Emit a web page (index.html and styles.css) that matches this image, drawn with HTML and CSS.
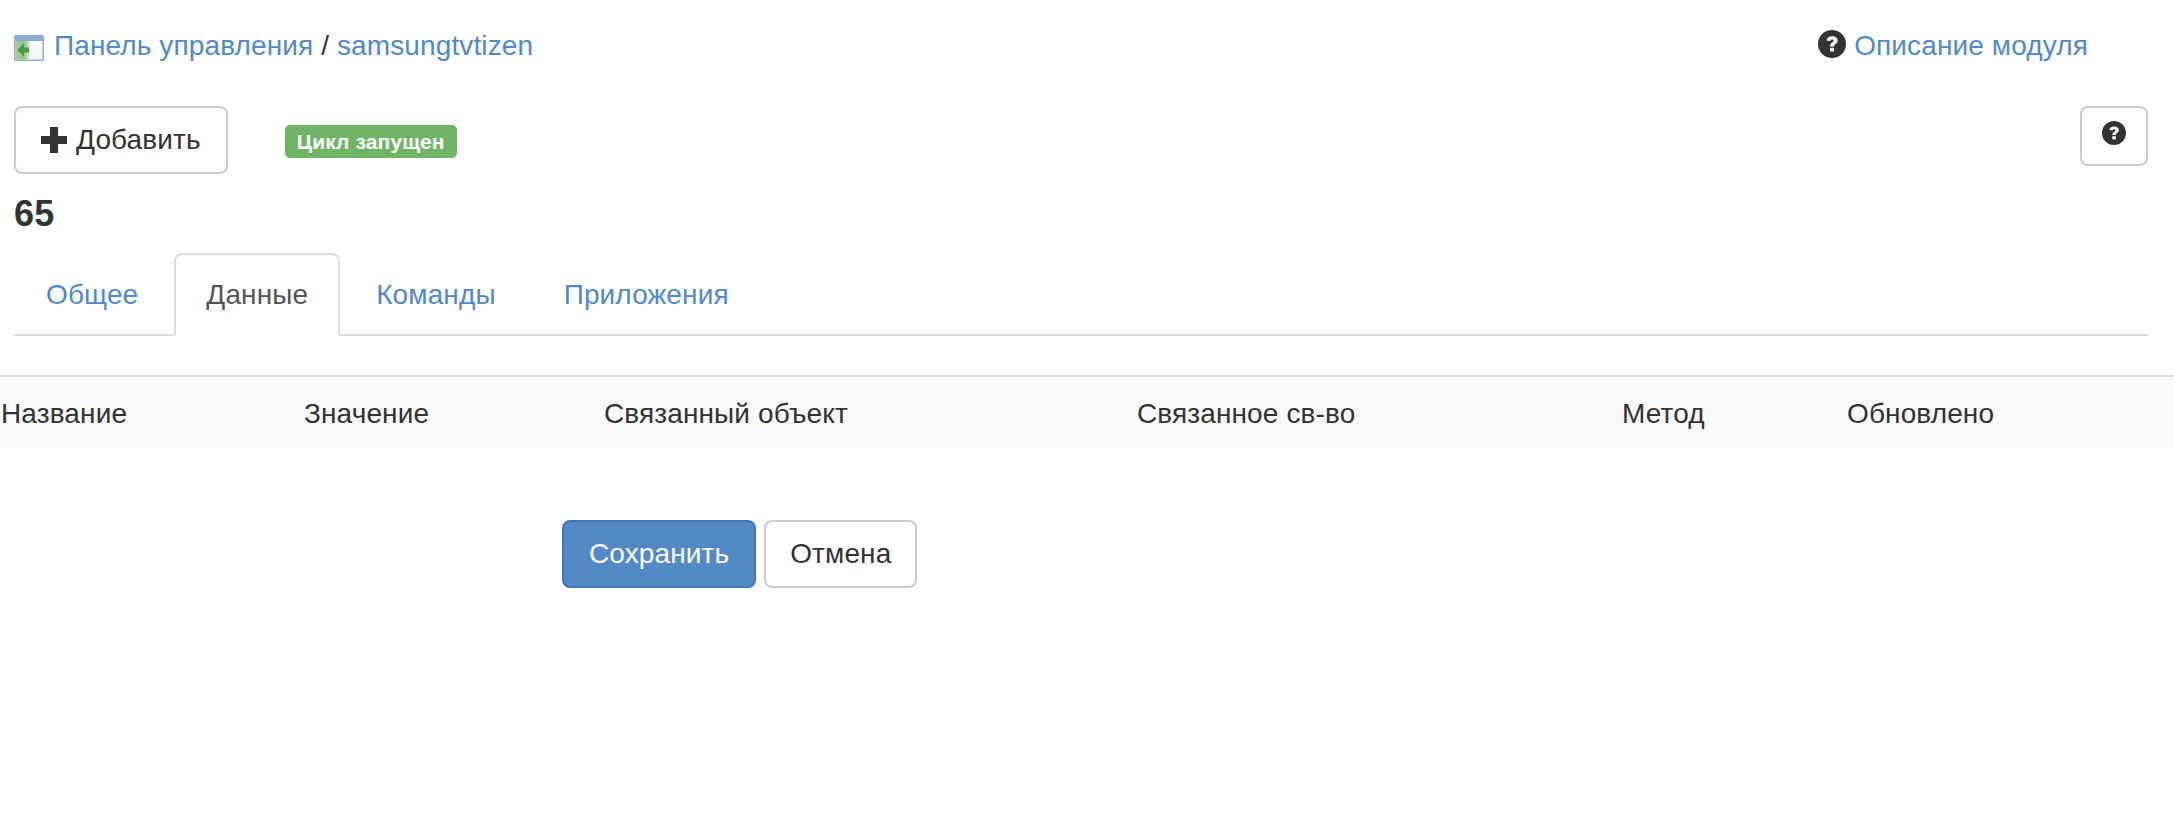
FILE: index.html
```html
<!DOCTYPE html>
<html lang="ru">
<head>
    <meta charset="utf-8">
    <title>samsungtvtizen</title>
    <link rel="stylesheet" href="styles.css">
</head>
<body>
    <!-- top -->
    <div class="wrap">
        <div class="topRow">
            <div class="crumbs">
                <svg class="panelIcon" width="30" height="26" viewBox="0 0 30 26">
                    <defs>
                        <linearGradient id="leftFade" x1="0" x2="1" y1="0" y2="0">
                            <stop offset="0" stop-color="#a8d09c"/>
                            <stop offset="0.55" stop-color="#8cc080"/>
                            <stop offset="1" stop-color="#eef3ec"/>
                        </linearGradient>
                    </defs>
                    <rect width="30" height="26" rx="1.500" fill="#8facd2"/>
                    <rect x="1.500" y="6" width="27" height="18.500" fill="#f6f7f9"/>
                    <rect x="1.500" y="6" width="15" height="18.500" fill="url(#leftFade)"/>
                    <path d="M3 15 10 8.500V12.500h5v5h-5v4z" fill="#4a9a48"/>
                </svg>
                <a href="#">Панель управления</a> / <a href="#">samsungtvtizen</a>
            </div>
            <div class="moduleInfo">
                <svg class="helpIcon" width="28" height="28" viewBox="0 0 28 28">
                    <circle cx="14" cy="14" r="14" fill="#333"/>
                    <path d="M8.500 10.400C9 7.600 11.200 6.300 14.200 6.300c3.200 0 5.400 1.600 5.400 4.200 0 3.500-3.500 3.200-3.500 5.900h-4c0-4.200 3.500-3.800 3.500-5.700 0-.8-.6-1.200-1.500-1.200-1 0-1.500.6-1.700 1.500z" fill="#fff"/>
                    <rect x="12.100" y="17.800" width="4" height="3.600" fill="#fff"/>
                </svg>
                <a href="#">Описание модуля</a>
            </div>
        </div>

        <div class="toolbar">
            <a class="btn btnAdd" href="#">
                <svg width="26" height="26" viewBox="0 0 26 26"><path d="M9 0h8v9h9v8h-9v9H9v-9H0V9h9z" fill="#333"/></svg>
                Добавить
            </a>
            <span class="badgeOk">Цикл запущен</span>
            <a class="btn btnHelp" href="#">
                <svg width="24" height="24" viewBox="0 0 28 28">
                    <circle cx="14" cy="14" r="14" fill="#333"/>
                    <path d="M8.500 10.400C9 7.600 11.200 6.300 14.200 6.300c3.200 0 5.400 1.600 5.400 4.200 0 3.500-3.500 3.200-3.500 5.900h-4c0-4.200 3.500-3.800 3.500-5.700 0-.8-.6-1.200-1.500-1.200-1 0-1.500.6-1.700 1.500z" fill="#fff"/>
                    <rect x="12.100" y="17.800" width="4" height="3.600" fill="#fff"/>
                </svg>
            </a>
        </div>

        <h3 class="devTitle">65</h3>

        <ul class="tabs">
            <li><a href="#">Общее</a></li>
            <li class="active"><a href="#">Данные</a></li>
            <li><a href="#">Команды</a></li>
            <li><a href="#">Приложения</a></li>
        </ul>
    </div>

    <!-- table -->
    <table class="dataTable">
        <thead>
            <tr>
                <th class="colName">Название</th>
                <th class="colValue">Значение</th>
                <th class="colObject">Связанный объект</th>
                <th class="colProp">Связанное св-во</th>
                <th class="colMethod">Метод</th>
                <th>Обновлено</th>
            </tr>
        </thead>
    </table>

    <div class="formActions">
        <a class="btn btnSave" href="#">Сохранить</a>
        <a class="btn btnCancel" href="#">Отмена</a>
    </div>
</body>
</html>
```

FILE: styles.css
```css
* {margin: 0; padding: 0; box-sizing: border-box;}
body {font: 28px/40px "Liberation Sans", Arial, sans-serif; letter-spacing: 0.12px; color: #333; background: #fff;}
a {color: #5389c4; text-decoration: none;}

.wrap {padding: 26px 26px 0 14px;}

/* top */
.topRow {display: flex; justify-content: space-between; height: 40px;}
.crumbs {display: flex; align-items: center; white-space: pre;}
.panelIcon {margin-right: 10px; margin-top: 3px;}
.moduleInfo {display: flex; align-items: center; gap: 8px; margin-right: 60px;}
.helpIcon {margin-top: -4px;}

/* buttons */
.btn {display: inline-flex; align-items: center; justify-content: center; height: 68px; padding: 0 25px; border: 2px solid #ccc; border-radius: 8px; color: #333; background: #fff;}
.btnAdd {gap: 9px;}
.btnHelp {width: 68px; height: 60px; padding: 0 0 6px; margin-left: auto;}
.btnSave {background: #5389c4; border-color: #4378b5; color: #fff;}
.btnCancel {padding: 0 24px;}

.toolbar {display: flex; align-items: flex-start; margin-top: 40px;}
.badgeOk {margin: 19px 0 0 57px; height: 33px; padding: 0 12px; border-radius: 5px; background: #70b566; color: #fff; font-size: 21px; line-height: 33px; font-weight: bold;}

.devTitle {font-size: 36px; line-height: 40px; font-weight: bold; margin-top: 20px;}

/* tabs */
.tabs {display: flex; list-style: none; margin-top: 19px; border-bottom: 2px solid #ddd; height: 83px;}
.tabs li {margin-right: 4px;}
.tabs a {display: block; height: 83px; padding: 20px 30px; border: 2px solid transparent; border-radius: 8px 8px 0 0;}
.tabs .active a {color: #555; background: #fff; border-color: #ddd #ddd #fff;}

/* table */
.dataTable {width: 100%; border-collapse: collapse; table-layout: fixed; margin-top: 39px; background: #f9f9f9; border-top: 2px solid #ddd;}
.dataTable th {padding: 17px 0 15px; text-align: left; font-weight: normal;}
.colName {width: 304px; padding-left: 1px !important;}
.colValue {width: 300px;}
.colObject {width: 533px;}
.colProp {width: 485px;}
.colMethod {width: 225px;}

/* form buttons */
.formActions {display: flex; gap: 8px; margin: 71px 0 0 562px;}
```
